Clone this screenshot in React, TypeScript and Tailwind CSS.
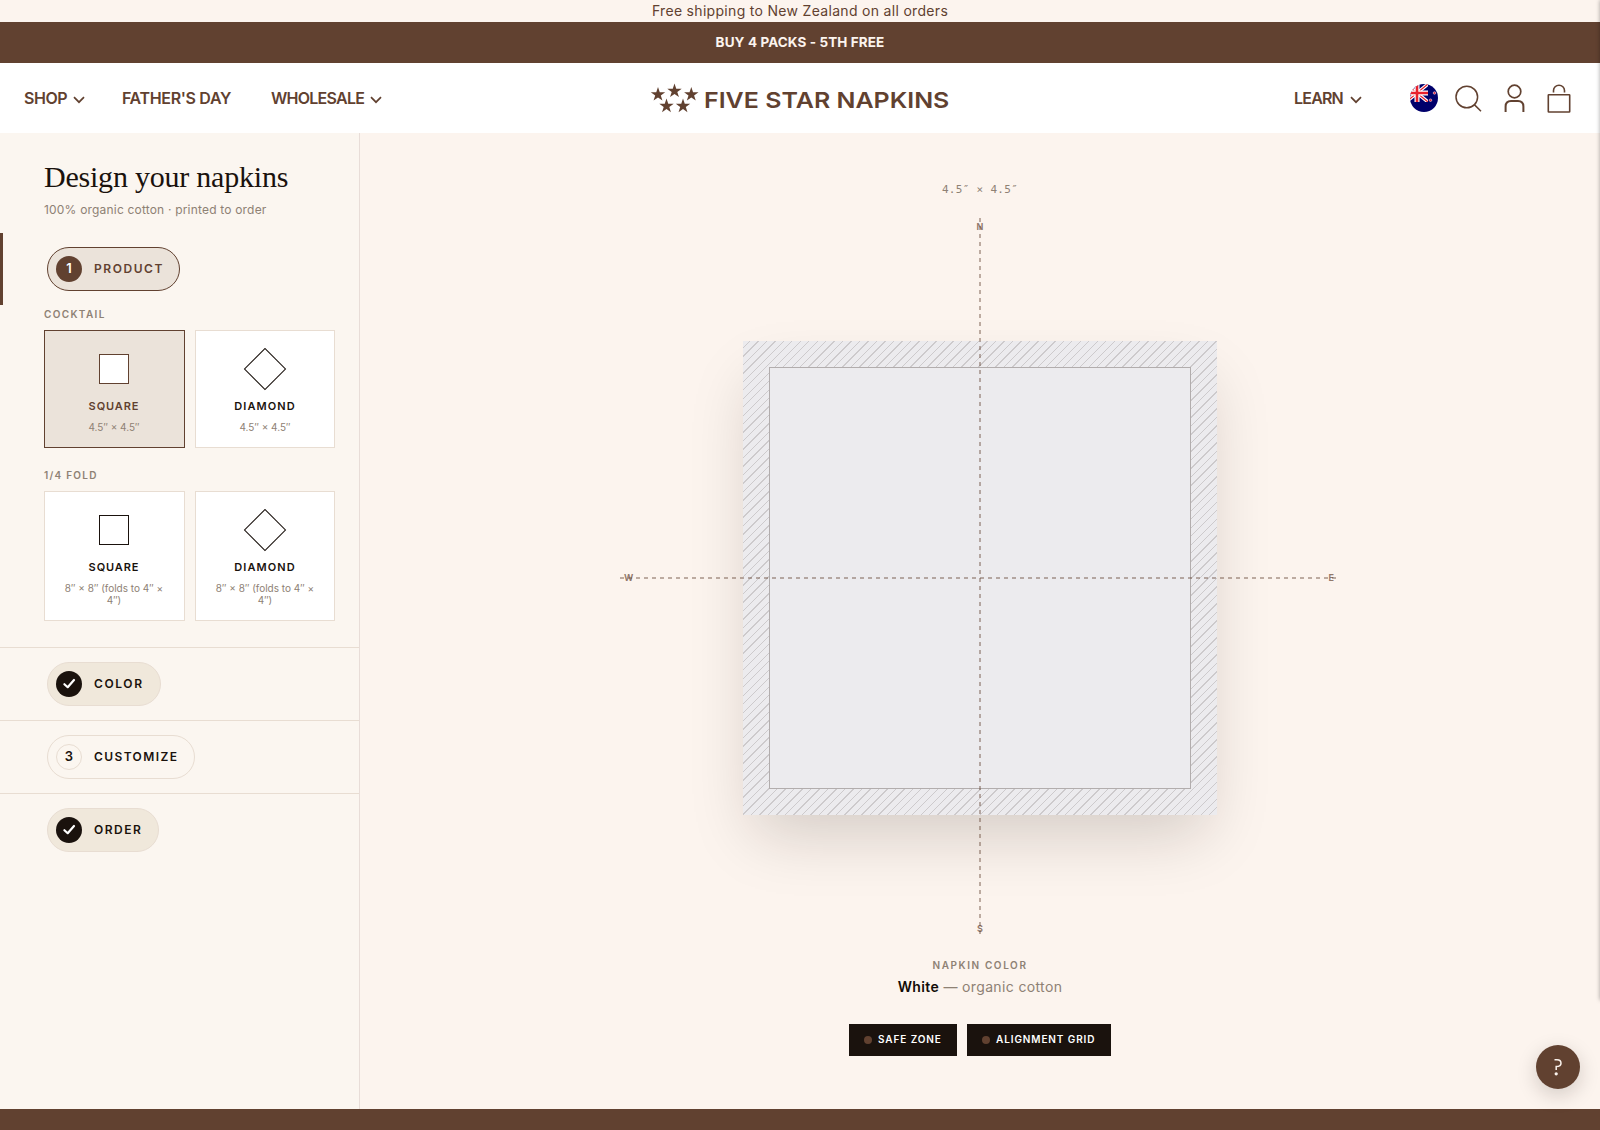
import React from "react";

const STAR = "M0 -7.6 L1.75 -2.35 L7.2 -2.35 L2.8 0.9 L4.45 6.1 L0 2.9 L-4.45 6.1 L-2.8 0.9 L-7.2 -2.35 L-1.75 -2.35 Z";

function Chevron() {
  return (
    <svg width="12" height="8" viewBox="0 0 12 8" fill="none" stroke="#614130" strokeWidth="1.7">
      <path d="M1 1.2 L6 6.2 L11 1.2" />
    </svg>
  );
}

function Logo() {
  return (
    <div className="flex items-center">
      <svg width="50" height="32" viewBox="0 0 50 32" fill="#614130">
        {[[8, 12.5], [24.5, 9], [41.3, 12.5], [16.5, 24.2], [33, 24.2]].map(([x, y]) => (
          <path key={x} d={STAR} transform={`translate(${x} ${y})`} />
        ))}
      </svg>
      <span className="ml-[4px] mt-[4px] w-[247px] origin-left scale-x-[1.135] whitespace-nowrap text-[22px] leading-[30px] font-semibold">FIVE STAR NAPKINS</span>
    </div>
  );
}

function Flag() {
  return (
    <svg width="28" height="28" viewBox="0 0 28 28">
      <defs>
        <clipPath id="disc"><circle cx="14" cy="14" r="14" /></clipPath>
        <clipPath id="canton"><rect width="18" height="18" /></clipPath>
      </defs>
      <g clipPath="url(#disc)">
        <rect width="28" height="28" fill="#00006b" />
        <g clipPath="url(#canton)">
          <path d="M-4 0 L18 18 M18 0 L-4 18" stroke="#fff" strokeWidth="3.4" />
          <path d="M-4 0 L18 18 M18 0 L-4 18" stroke="#e8202c" strokeWidth="1.3" />
          <path d="M7 0 V18 M0 9 H18" stroke="#fff" strokeWidth="5" />
          <path d="M7 0 V18 M0 9 H18" stroke="#e8202c" strokeWidth="2.6" />
        </g>
        <g fill="#e0203c" stroke="#fff" strokeWidth=".5">
          <circle cx="24.5" cy="9" r="1.3" /><circle cx="20.5" cy="16.2" r="1.3" />
        </g>
      </g>
    </svg>
  );
}

type StepProps = { label: string; mark: string; kind: "active" | "done" | "todo"; width: string; tracking: string };

function Step({ label, mark, kind, width, tracking }: StepProps) {
  const shell = kind === "active" ? "border-[#614130] bg-[#ebe3da] text-[#614130]" : kind === "done" ? "border-[#e8ddd2] bg-[#f0e8db] text-[#1a120d]" : "border-[#e8ddd2] text-[#1a120d]";
  const dot = kind === "active" ? "bg-[#614130] text-white" : kind === "done" ? "bg-[#1a120d] text-white" : "border border-[#e8ddd2]";
  return (
    <div className={`ml-[47px] flex h-11 items-center rounded-full border pl-2 ${width} ${shell}`}>
      <span className={`flex size-[26px] items-center justify-center rounded-full text-[13px] font-semibold ${dot}`}>
        {kind === "done" ? (
          <svg width="14" height="14" viewBox="0 0 14 14" fill="none" stroke="#fff" strokeWidth="2.2" strokeLinecap="round" strokeLinejoin="round"><path d="M2.4 7.2 L5.7 10.2 L12 3" /></svg>
        ) : mark}
      </span>
      <span className={`ml-3 text-[12px] font-semibold ${tracking}`}>{label}</span>
    </div>
  );
}

type CardProps = { diamond?: boolean; size: string; selected?: boolean; tall?: boolean };

function Card({ diamond, size, selected, tall }: CardProps) {
  return (
    <div className={`flex flex-col items-center border pt-[23px] pl-4 ${diamond ? "pr-4" : "pr-[17px]"} ${tall ? "h-[130px]" : "h-[118px]"} ${selected ? "border-[#614130] bg-[#ebe3da] text-[#614130]" : "border-[#e8ddd2] bg-white text-[#1a120d]"}`}>
      <div className={`size-[30px] shrink-0 border bg-white ${diamond ? "rotate-45" : ""} ${selected ? "border-[#614130]" : "border-[#1a120d]"}`} />
      <div className={`mt-[13px] text-[11px] leading-[18px] font-semibold ${diamond ? "tracking-[1.1px]" : "tracking-[0.9px]"}`}>{diamond ? "DIAMOND" : "SQUARE"}</div>
      <div className="mt-[6px] text-center text-[10px] leading-[12px] text-[#8e8174]">{size}</div>
    </div>
  );
}

export default function App() {
  return (
    <div className="relative flex h-[1130px] w-[1600px] flex-col overflow-hidden bg-[#fcf4ee] font-['Inter',sans-serif] text-[#614130]">
      <div className="h-[22px] text-center text-[14px] leading-[22px] tracking-[0.31px]">Free shipping to New Zealand on all orders</div>
      <div className="h-[41px] bg-[#614130] text-center text-[13.5px] leading-[40px] font-bold tracking-[0.1px] text-[#fcf4ee]">BUY 4 PACKS - 5TH FREE</div>
      <header className="grid h-[70px] grid-cols-[1fr_auto_1fr] items-center bg-white text-[16px] font-semibold">
        <nav className="flex items-center pl-6">
          <span className="w-[44px] whitespace-nowrap tracking-[-0.45px]">SHOP</span><span className="ml-[5px] mt-1"><Chevron /></span>
          <span className="ml-[37px] w-[110px] whitespace-nowrap tracking-[-0.35px]">FATHER'S DAY</span>
          <span className="ml-[39px] w-[94px] whitespace-nowrap tracking-[-0.75px]">WHOLESALE</span><span className="ml-[5px] mt-1"><Chevron /></span>
        </nav>
        <Logo />
        <div className="flex items-center justify-end pr-[29px]">
          <span className="w-[49px] whitespace-nowrap tracking-[-0.8px]">LEARN</span><span className="mt-1 ml-[7px] mr-[48px]"><Chevron /></span>
          <Flag />
          <svg className="ml-[17px]" width="27" height="27" viewBox="0 0 27 27" fill="none" stroke="#614130" strokeWidth="1.5"><circle cx="11.8" cy="12" r="10.8" /><path d="M19.3 19.6 L26 26.3" /></svg>
          <svg className="ml-[22px]" width="21" height="28" viewBox="0 0 21 28" fill="none" stroke="#614130" strokeWidth="1.7"><circle cx="10.5" cy="7.5" r="6.3" /><path strokeWidth="2" d="M1.6 28 V22.5 Q1.6 17 7 17 H14 Q19.4 17 19.4 22.5 V28" /></svg>
          <svg className="ml-[22px]" width="24" height="29" viewBox="0 0 24 29" fill="none" stroke="#614130" strokeWidth="1.6"><rect x="1.3" y="10.8" width="21.4" height="17.2" rx=".5" /><path d="M6.5 8.5 V6.5 A5.5 5.3 0 0 1 17.5 6.5 V8.5" /></svg>
        </div>
      </header>
      <div className="flex h-[976px]">
        <aside className="w-[360px] shrink-0 border-r border-[#e8ddd8] bg-[#fbf6f0]">
          <div className="h-[100px] pl-11 pt-[24px]">
            <h1 className="font-['Liberation_Serif',serif] text-[30px] leading-[40px] tracking-[-0.22px] whitespace-nowrap text-[#1a120d]">Design your napkins</h1>
            <p className="mt-[4px] text-[12px] leading-[18px] tracking-[0.19px] text-[#8e8174]">100% organic cotton · printed to order</p>
          </div>
          <section className="h-[414px]">
            <div className="flex h-[72px] items-center border-l-[3px] border-[#614130]"><div className="-ml-[3px]"><Step label="PRODUCT" mark="1" kind="active" width="w-[133px]" tracking="tracking-[1.55px]" /></div></div>
            <div className="px-11 pr-6">
              <div className="h-[25px] text-[10px] leading-[18px] font-semibold tracking-[1.35px] text-[#8e8174]">COCKTAIL</div>
              <div className="grid grid-cols-[141px_140px] gap-[10px]">
                <Card size="4.5″ × 4.5″" selected /><Card diamond size="4.5″ × 4.5″" />
              </div>
              <div className="mt-[18px] h-[25px] text-[10px] leading-[18px] font-semibold tracking-[1.25px] text-[#8e8174]">1/4 FOLD</div>
              <div className="grid grid-cols-[141px_140px] gap-[10px]">
                <Card size="8″ × 8″ (folds to 4″ × 4″)" tall /><Card diamond size="8″ × 8″ (folds to 4″ × 4″)" tall />
              </div>
            </div>
          </section>
          <div className="flex h-[73px] items-center border-t border-[#e8ddd2]"><Step label="COLOR" mark="2" kind="done" width="w-[114px]" tracking="tracking-[1.6px]" /></div>
          <div className="flex h-[73px] items-center border-t border-[#e8ddd2]"><Step label="CUSTOMIZE" mark="3" kind="todo" width="w-[148px]" tracking="tracking-[1.4px]" /></div>
          <div className="flex h-[73px] items-center border-t border-[#e8ddd2]"><Step label="ORDER" mark="4" kind="done" width="w-[112px]" tracking="tracking-[1.5px]" /></div>
        </aside>
        <main className="flex flex-1 flex-col items-center">
          <div className="mt-[47px] h-[38px] font-['DejaVu_Sans_Mono',monospace] text-[11px] leading-[20px] tracking-[0.3px] text-[#8e8174]">4.5″ × 4.5″</div>
          <div className="relative flex size-[716px] items-center justify-center pt-1">
            <div className="size-[474px] bg-[#ecebee] bg-[repeating-linear-gradient(-45deg,transparent_0_5px,#cdcacc_5px_6px)] p-[26px] shadow-[0_30px_60px_-12px_rgba(26,18,13,0.18)]">
              <div className="size-full border border-[#b2adad] bg-[#ecebee]" />
            </div>
            <div className="absolute left-[357px] top-0 h-full w-[2px] bg-[repeating-linear-gradient(to_bottom,#61413068_0_4px,transparent_4px_8px)]" />
            <div className="absolute -left-[2px] top-[359px] h-[2px] w-full bg-[repeating-linear-gradient(to_right,#61413068_0_4px,transparent_4px_8px)]" />
            <span className="absolute top-[3px] text-[9px] leading-[12px] font-bold text-[#614130b0]">N</span>
            <span className="absolute -bottom-px text-[9px] leading-[12px] font-bold text-[#614130b0]">S</span>
            <span className="absolute left-[2px] text-[9px] leading-[12px] font-bold text-[#614130b0]">W</span>
            <span className="absolute right-[4px] text-[9px] leading-[12px] font-bold text-[#614130b0]">E</span>
          </div>
          <div className="mt-[21px] text-[10px] leading-[20px] font-semibold tracking-[1.6px] text-[#8e8174]">NAPKIN COLOR</div>
          <div className="mt-[1px] text-[14px] leading-[22px] tracking-[0.36px] text-[#8e8174]"><b className="font-semibold text-[#120c08]">White</b> — organic cotton</div>
          <div className="mt-[26px] flex gap-[10px] text-[10px] font-semibold text-white">
            <div className="flex h-8 w-[108px] items-center bg-[#1a120d] pb-px pl-[15px] tracking-[0.9px]"><i className="mr-[6px] mt-px size-2 rounded-full bg-[#614130]" />SAFE ZONE</div>
            <div className="flex h-8 w-[144px] items-center bg-[#1a120d] pb-px pl-[15px] tracking-[0.9px]"><i className="mr-[6px] mt-px size-2 rounded-full bg-[#614130]" />ALIGNMENT GRID</div>
          </div>
        </main>
      </div>
      <footer className="h-[21px] bg-[#614130]" />
      <div className="absolute left-[1536px] top-[1045px] flex size-11 items-center justify-center rounded-full bg-[#614130] shadow-[0_6px_20px_rgba(26,18,13,0.18)]">
        <svg width="10" height="18" viewBox="0 0 10 18" fill="none" stroke="#fcf4ee" strokeWidth="1.5"><path d="M1.5 1.8 H4 Q8 1.8 8 5.3 Q8 8.6 3.2 8.6 V12" /><circle cx="3.2" cy="15.8" r=".9" fill="#fcf4ee" /></svg>
      </div>
      <div className="absolute left-[1600px] top-0 h-[1000px] w-2 shadow-[0_0_4px_rgba(0,0,0,0.35)]" />
    </div>
  );
}
